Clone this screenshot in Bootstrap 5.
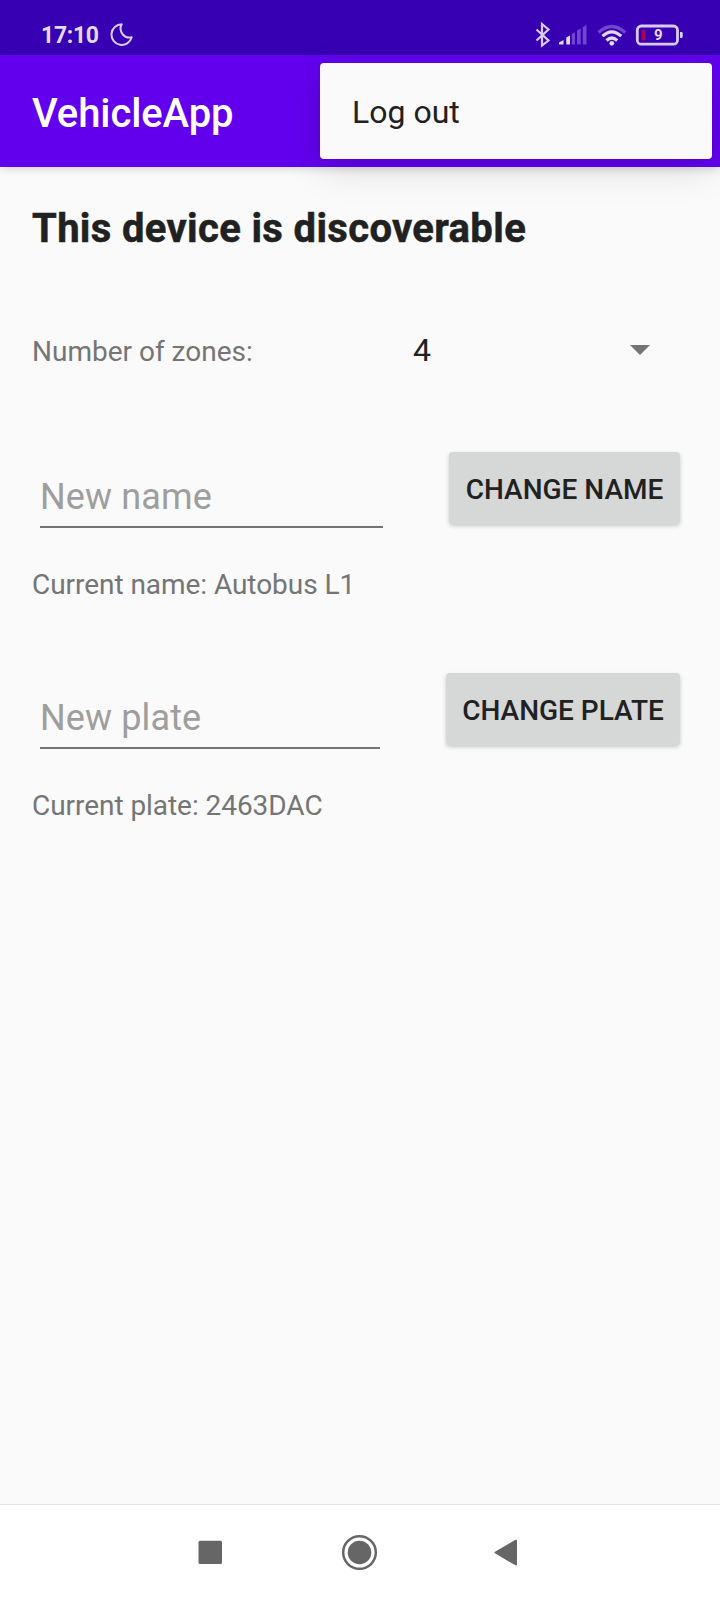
<!DOCTYPE html>
<html lang="en">
<head>
<meta charset="utf-8">
<meta name="viewport" content="width=device-width, initial-scale=1">
<title>VehicleApp</title>
<link href="https://cdn.jsdelivr.net/npm/bootstrap@5.3.0/dist/css/bootstrap.min.css" rel="stylesheet">
<style>
  body { font-family: Roboto, sans-serif; background: #fafafa; color: #212121; height: 1600px; overflow: hidden; }
  svg { display: block; flex: none; }
  .statusbar { height: 55px; background: #3700b3; color: #e4d9f8; padding: 14px 36px 0 41px; }
  .clock { font-size: 23px; font-weight: 700; line-height: 44px; width: 69px; letter-spacing: -.3px; }
  .appbar { height: 112px; background: #6200ee; padding: 0 32px; box-shadow: 0 2px 8px rgba(0,0,0,.15); }
  .app-title { font-size: 40px; font-weight: 500; color: #fff; line-height: 48px; padding-top: 6px; letter-spacing: -.1px; }
  .overflow-menu { position: absolute; top: 8px; right: 8px; width: 392px; height: 96px; background: #fafafa; border-radius: 4px; box-shadow: 0 10px 36px rgba(0,0,0,.13), 0 0 5px rgba(0,0,0,.08); }
  .overflow-menu a { font-size: 32px; line-height: 98px; padding: 0 32px; color: #212121; }
  main { padding: 38px 40px 0 32px; }
  h1.headline { font-size: 40px; font-weight: 700; line-height: 48px; margin: 0; letter-spacing: .34px; color: #212121; -webkit-text-stroke: .5px #212121; }
  .caption { font-size: 28px; line-height: 32px; color: #757575; margin-top: 41px; letter-spacing: -.05px; }
  .zones { margin-top: 77px; line-height: 40px; height: 40px; }
  .zones label { width: 381px; font-size: 28px; color: #757575; }
  .zones span { font-size: 32px; }
  .zones svg { margin: 15px 30px 0 auto; }
  .field-row { height: 76px; padding-left: 8px; margin-top: 82px; }
  .caption + .field-row { margin-top: 72px; }
  .field-row .form-control { font-family: inherit; font-size: 36px; height: 76px; padding: 16px 0 0; border: 0; border-bottom: 2px solid #757575; border-radius: 0; background: none; line-height: 1.3; letter-spacing: .12px; }
  .form-control::placeholder { color: #9e9e9e; opacity: 1; }
  .btn-change { flex: none; height: 72px; border: 0; border-radius: 4px; background: #d6d7d7; color: #212121; font-size: 28px; font-weight: 500; padding: 3px 0 0; margin-left: 66px; text-transform: uppercase; white-space: nowrap; box-shadow: 0 2px 4px rgba(0,0,0,.2); }
  .navkeys { height: 96px; background: #fff; border-top: 1px solid #e2e2e2; }
</style>
</head>
<body class="d-flex flex-column">
  <div class="statusbar d-flex">
    <div class="clock">17:10</div>
    <svg width="24" height="24" viewBox="0 0 24 24" fill="none" stroke="#d9cbf4" stroke-width="2" stroke-linejoin="round" style="margin-top:9px"><path d="M11.7 1.3A10.3 10.3 0 1 0 21.7 14.3A9 9 0 0 1 11.7 1.3Z"/></svg>
    <div class="d-flex ms-auto">
      <svg width="149" height="30" viewBox="535 20 149 30" style="margin-top:6px">
        <path d="M536.5 29.5L548.5 40.5L542 45.5V24L548.5 29.5L536.5 40.5" fill="none" stroke="#d9cbf4" stroke-width="2.200"/>
        <path d="M559 44.500V42.500L563.500 40V44.500ZM566.300 44.500V37.500L570 35.500V44.500Z" fill="#e4d9f8"/>
        <path d="M571.800 44.500V34L575 32.200V44.500ZM577 44.500V30.500L580.700 28.500V44.500ZM582.800 44.500V27.200L586.500 25V44.500Z" fill="#7445cd"/>
        <path d="M598.500 32.500Q611.800 20.500 625.200 32.500" stroke="#7445cd" stroke-width="3.200" fill="none"/>
        <path d="M602.500 36.200Q611.800 27.500 621.200 36.200M606.500 40.500Q611.800 35.500 617.200 40.500" stroke="#e4d9f8" stroke-width="3.200" fill="none"/>
        <circle cx="611.800" cy="43.300" r="2.400" fill="#e4d9f8"/>
        <rect x="637.300" y="26" width="40.200" height="18.200" rx="4" fill="none" stroke="#d9cbf4" stroke-width="2.800"/>
        <rect x="641.500" y="30" width="4" height="10.500" rx="1" fill="#b0004e"/>
        <path d="M680 32h1.500q1.200 0 1.200 1.200v3.600q0 1.200-1.200 1.200H680Z" fill="#d9cbf4"/>
        <text x="658.200" y="40" text-anchor="middle" font-family="Roboto, sans-serif" font-size="15" font-weight="700" fill="#e4d9f8">9</text>
      </svg>
    </div>
  </div>
  <header class="appbar d-flex align-items-center position-relative">
    <div class="app-title">VehicleApp</div>
    <div class="overflow-menu"><a href="#" class="d-block text-decoration-none">Log out</a></div>
  </header>
  <main class="flex-grow-1">
    <h1 class="headline">This device is discoverable</h1>
    <div class="zones d-flex align-items-baseline">
      <label>Number of zones:</label>
      <span>4</span>
      <svg class="align-self-start" width="20" height="10" viewBox="0 0 20 10"><path d="M0 0H20L10 10Z" fill="#757575"/></svg>
    </div>
    <div class="field-row d-flex align-items-start">
      <input class="form-control" placeholder="New name">
      <button class="btn-change" style="width:231px">Change name</button>
    </div>
    <div class="caption">Current name: Autobus L1</div>
    <div class="field-row d-flex align-items-start">
      <input class="form-control" placeholder="New plate">
      <button class="btn-change" style="width:234px">Change plate</button>
    </div>
    <div class="caption">Current plate: 2463DAC</div>
  </main>
  <nav class="navkeys d-flex">
    <svg width="720" height="95" viewBox="0 1505 720 95" fill="#666">
      <rect x="198.500" y="1540.700" width="23.500" height="23.300" rx="1.500"/>
      <circle cx="359.500" cy="1552.500" r="11.800"/>
      <circle cx="359.500" cy="1552.500" r="16.300" fill="none" stroke="#666" stroke-width="2.500"/>
      <path d="M495.500 1552.500L516 1540.700V1564.500Z" stroke="#666" stroke-width="2" stroke-linejoin="round"/>
    </svg>
  </nav>
<script src="https://cdn.jsdelivr.net/npm/bootstrap@5.3.0/dist/js/bootstrap.bundle.min.js"></script>
</body>
</html>
